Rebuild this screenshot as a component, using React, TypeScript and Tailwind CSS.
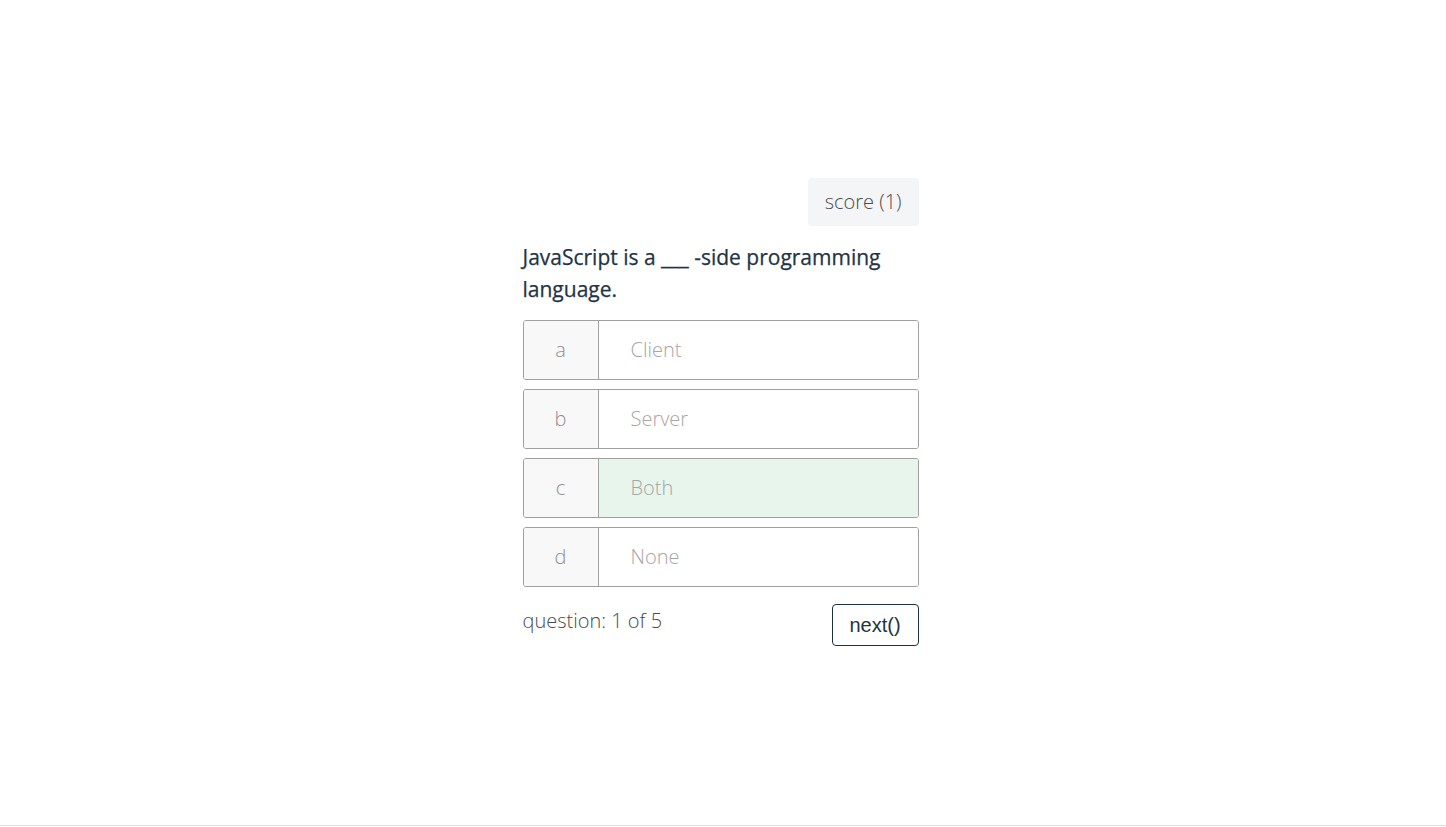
const options = [
  { letter: "a", text: "Client", selected: false },
  { letter: "b", text: "Server", selected: false },
  { letter: "c", text: "Both", selected: true },
  { letter: "d", text: "None", selected: false },
]

export default function App() {
  return (
    <div className="h-[827px] bg-white font-['Open_Sans',sans-serif]">
      <div className="h-[826px] border-b border-[#e2e2e2] flex justify-center pr-[5px] pt-[178px]">
        <div className="w-[396px]">
          {/* score */}
          <div className="flex justify-end">
            <div className="h-[48px] px-[17px] flex items-center rounded-[4px] bg-[#f4f5f7] text-[20px] font-light text-[#4a4a4a]">
              score (1)
            </div>
          </div>

          {/* question */}
          <h2 className="mt-[15px] text-[21px] leading-[32px] font-medium text-[#1f3444] [-webkit-text-stroke:0.25px_#1f3444]">
            JavaScript is a ___ -side programming language.
          </h2>

          {/* options */}
          <div className="mt-[15px] flex flex-col gap-[9px]">
            {options.map((o) => (
              <div
                key={o.letter}
                className="flex h-[60px] border border-[#a0a0a0] rounded-[3px] overflow-hidden text-[20px] font-light text-[#a6a6a6]"
              >
                <div className="w-[75px] flex items-center justify-center bg-[#f8f8f8] border-r border-[#a0a0a0] text-[#8f8f8f]">
                  {o.letter}
                </div>
                <div className={`flex-1 flex items-center pl-[32px] ${o.selected ? "bg-[#e8f5ec]" : "bg-white"}`}>
                  {o.text}
                </div>
              </div>
            ))}
          </div>

          {/* footer */}
          <div className="mt-[17px] flex justify-between items-start">
            <div className="pt-[1px] text-[20px] font-light text-[#4a4a4a] leading-[32px]">question: 1 of 5</div>
            <button className="h-[42px] w-[87px] border border-[#1e3342] rounded-[4px] text-[20px] text-[#1e3342] font-['Liberation_Sans',sans-serif] bg-white">
              next()
            </button>
          </div>
        </div>
      </div>
    </div>
  )
}
